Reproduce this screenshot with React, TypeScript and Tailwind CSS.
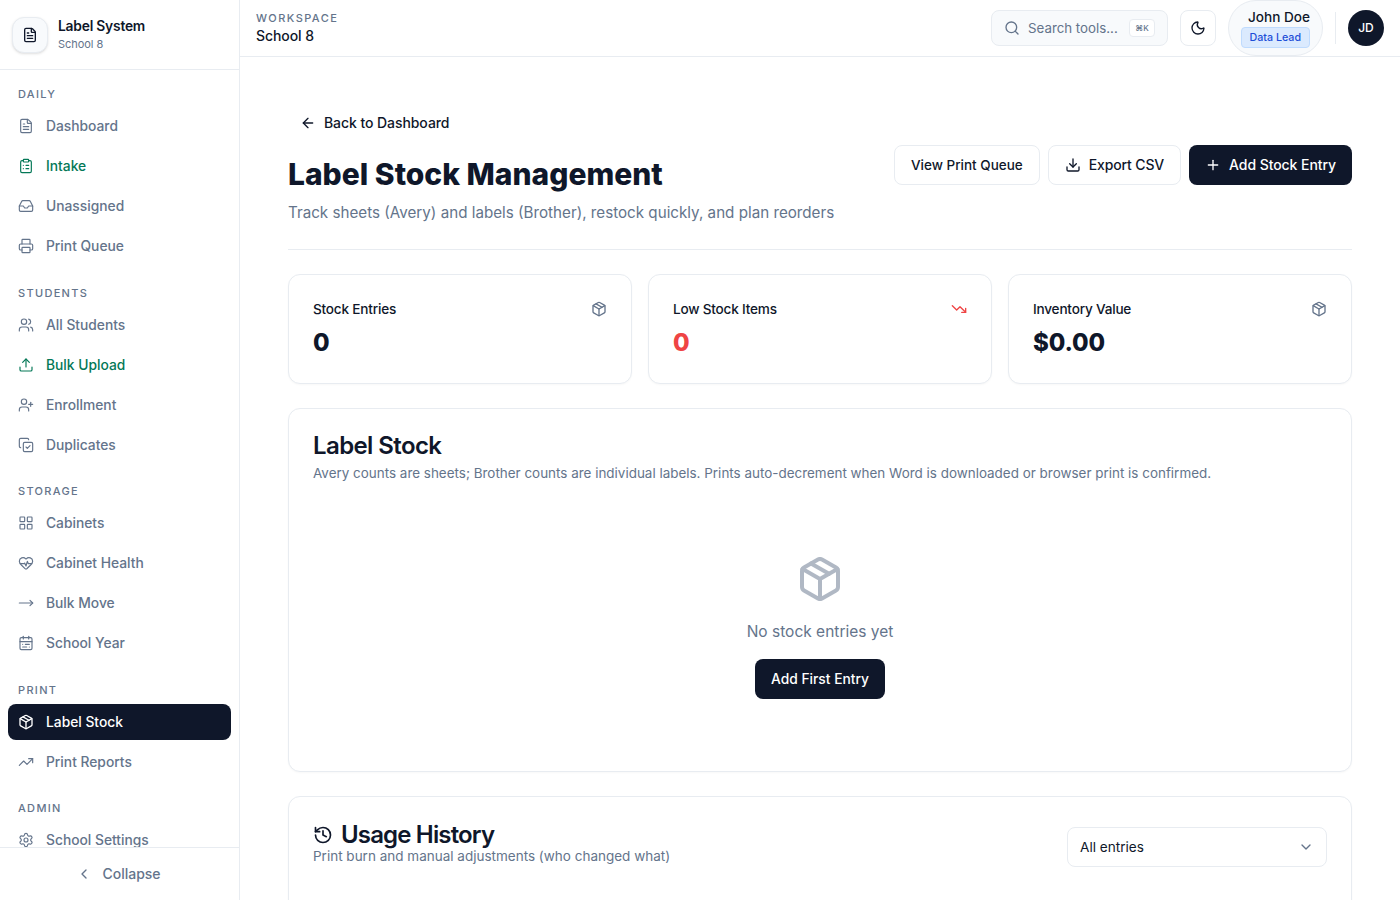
import {
  ArrowLeft,
  CalendarRange,
  ChevronDown,
  ChevronLeft,
  ClipboardList,
  CopyCheck,
  Download,
  FileText,
  HeartPulse,
  History,
  Inbox,
  LayoutGrid,
  Moon,
  MoveRight,
  Package,
  Plus,
  Printer,
  Search,
  Settings,
  TrendingDown,
  TrendingUp,
  Upload,
  UserPlus,
  Users,
} from "lucide-react";

const sections = [
  {
    title: "DAILY",
    items: [
      { label: "Dashboard", icon: FileText },
      { label: "Intake", icon: ClipboardList, green: true },
      { label: "Unassigned", icon: Inbox },
      { label: "Print Queue", icon: Printer },
    ],
  },
  {
    title: "STUDENTS",
    items: [
      { label: "All Students", icon: Users },
      { label: "Bulk Upload", icon: Upload, green: true },
      { label: "Enrollment", icon: UserPlus },
      { label: "Duplicates", icon: CopyCheck },
    ],
  },
  {
    title: "STORAGE",
    items: [
      { label: "Cabinets", icon: LayoutGrid },
      { label: "Cabinet Health", icon: HeartPulse },
      { label: "Bulk Move", icon: MoveRight },
      { label: "School Year", icon: CalendarRange },
    ],
  },
  {
    title: "PRINT",
    items: [
      { label: "Label Stock", icon: Package, active: true },
      { label: "Print Reports", icon: TrendingUp },
    ],
  },
  {
    title: "ADMIN",
    items: [{ label: "School Settings", icon: Settings }],
  },
];

function Sidebar() {
  return (
    <aside className="flex h-full w-[240px] shrink-0 flex-col border-r border-[#e8ecf1] bg-white">
      <div className="flex h-[70px] shrink-0 items-center gap-[10px] border-b border-[#e8ecf1] px-3">
        <div className="flex h-9 w-9 items-center justify-center rounded-xl border border-[#e8ecf1] bg-[#f8fafc] shadow-sm">
          <FileText className="h-4 w-4 text-[#0f172a]" />
        </div>
        <div className="-mt-[2px]">
          <div className="text-[13.8px] leading-[20px] font-semibold tracking-[-0.015em] text-[#0f172a]">Label System</div>
          <div className="text-[11px] leading-[16px] tracking-[-0.005em] text-[#64748b]">School 8</div>
        </div>
      </div>
      <nav className="min-h-0 flex-1 overflow-hidden px-2 pt-4">
        {sections.map((s) => (
          <div key={s.title} className="mb-5">
            <div className="mb-[6.5px] px-[10px] text-[11px] leading-[16px] font-medium tracking-[0.12em] text-[#64748b]">{s.title}</div>
            <div className="flex flex-col gap-1">
              {s.items.map((item) => (
                <div
                  key={item.label}
                  className={
                    item.active
                      ? "flex h-9 items-center gap-3 rounded-lg bg-[#0f172a] px-[10px] text-[13.8px] font-medium text-white"
                      : item.green
                        ? "flex h-9 items-center gap-3 rounded-lg px-[10px] text-[13.8px] font-medium text-[#047857]"
                        : "flex h-9 items-center gap-3 rounded-lg px-[10px] text-[13.8px] font-medium text-[#64748b]"
                  }
                >
                  <item.icon className="-mt-[1px] h-4 w-4 shrink-0" strokeWidth={item.active ? 2 : 1.75} />
                  <span>{item.label}</span>
                </div>
              ))}
            </div>
          </div>
        ))}
      </nav>
      <div className="flex h-[53px] shrink-0 items-center justify-center gap-[10px] border-t border-[#e8ecf1] pb-[1px] text-[14px] font-medium text-[#64748b]">
        <ChevronLeft className="-ml-[2px] h-4 w-4" />
        <span>Collapse</span>
      </div>
    </aside>
  );
}

function Topbar() {
  return (
    <header className="flex h-[57px] shrink-0 items-center justify-between border-b border-[#e8ecf1] bg-white pr-4 pl-4">
      <div>
        <div className="text-[11px] leading-[16px] font-medium tracking-[0.13em] text-[#64748b]">WORKSPACE</div>
        <div className="text-[14px] leading-[20px] font-medium tracking-[-0.005em] text-[#0f172a]">School 8</div>
      </div>
      <div className="flex items-center">
        <div className="flex h-9 w-[177px] items-center rounded-lg border border-[#e8ecf1] bg-[#f8fafc] pr-3 pl-3">
          <Search className="h-4 w-4 shrink-0 text-[#64748b]" />
          <span className="ml-2 pt-[2px] text-[13.3px] text-[#64748b]">Search tools...</span>
          <span className="ml-auto flex h-[18px] w-[26px] items-center justify-center rounded border border-[#e8ecf1] bg-white text-[8px] font-medium text-[#64748b]">⌘K</span>
        </div>
        <div className="ml-3 flex h-9 w-9 items-center justify-center rounded-lg border border-[#e8ecf1] bg-white">
          <Moon className="h-4 w-4 text-[#0f172a]" />
        </div>
        <div className="ml-3 flex h-[56px] w-[95px] flex-col items-end justify-center rounded-full border border-[#e8ecf1] bg-[#f8fafc] pr-3">
          <div className="-mt-[2px] text-[13.6px] leading-[20px] font-medium text-[#0f172a]">John Doe</div>
          <div className="rounded border border-[#bfdbfe] bg-[#dbeafe] px-2 text-[10.7px] leading-[19px] font-medium text-[#1d4ed8]">Data Lead</div>
        </div>
        <div className="mx-3 h-8 w-px bg-[#e8ecf1]" />
        <div className="flex h-9 w-9 items-center justify-center rounded-full bg-[#0f172a] text-[12px] font-medium text-white">JD</div>
      </div>
    </header>
  );
}

function StatCard({ label, value, red, icon: Icon }: { label: string; value: string; red?: boolean; icon: typeof Package }) {
  return (
    <div className="h-[110px] rounded-xl border border-[#e8ecf1] bg-white px-6 pt-6 shadow-[0_1px_2px_rgba(15,23,42,0.03)]">
      <div className="flex items-center justify-between">
        <div className="text-[13.6px] leading-[20px] font-medium tracking-[-0.015em] text-[#0f172a]">{label}</div>
        <Icon className={red ? "h-4 w-4 text-[#ef4444]" : "h-4 w-4 text-[#64748b]"} />
      </div>
      <div className={red ? "mt-2 text-2xl font-extrabold text-[#ef4444]" : "mt-2 text-2xl font-extrabold tracking-[-0.005em] text-[#0f172a]"}>{value}</div>
    </div>
  );
}

export default function App() {
  return (
    <div className="flex h-screen overflow-hidden bg-white font-['Inter',sans-serif]">
      <Sidebar />
      <div className="flex min-w-0 flex-1 flex-col">
        <Topbar />
        <main className="min-h-0 flex-1 overflow-hidden px-12 pt-12">
          <div className="flex h-9 items-center gap-2 px-3 text-[14px] font-medium tracking-[-0.005em] text-[#0f172a]">
            <ArrowLeft className="h-4 w-4" />
            <span className="-mt-[1px]">Back to Dashboard</span>
          </div>
          <div className="mt-1 flex items-start justify-between border-b border-[#e8ecf1] pb-[24px]">
            <div className="pt-[11px]">
              <h1 className="text-3xl font-extrabold text-[#0f172a]">Label Stock Management</h1>
              <p className="mt-[9px] text-[15.2px] leading-[24px] text-[#64748b]">Track sheets (Avery) and labels (Brother), restock quickly, and plan reorders</p>
            </div>
            <div className="flex gap-2">
              <div className="flex h-10 items-center rounded-lg border border-[#e8ecf1] bg-white px-4 text-[13.5px] font-medium text-[#0f172a]">View Print Queue</div>
              <div className="flex h-10 items-center gap-2 rounded-lg border border-[#e8ecf1] bg-white px-4 text-[14px] font-medium tracking-[-0.01em] text-[#0f172a]">
                <Download className="h-4 w-4" />
                <span className="pb-[2px]">Export CSV</span>
              </div>
              <div className="flex h-10 items-center gap-2 rounded-lg bg-[#0f172a] px-4 text-[14px] font-medium tracking-[-0.005em] text-white">
                <Plus className="h-4 w-4" />
                <span className="pb-[2px]">Add Stock Entry</span>
              </div>
            </div>
          </div>

          <div className="mt-6 grid grid-cols-3 gap-4">
            <StatCard label="Stock Entries" value="0" icon={Package} />
            <StatCard label="Low Stock Items" value="0" red icon={TrendingDown} />
            <StatCard label="Inventory Value" value="$0.00" icon={Package} />
          </div>

          <section className="mt-6 h-[364px] rounded-xl border border-[#e8ecf1] bg-white px-6 pt-[25px] shadow-[0_1px_2px_rgba(15,23,42,0.03)]">
            <h2 className="text-2xl leading-none font-semibold tracking-[-0.025em] text-[#0f172a]">Label Stock</h2>
            <p className="mt-[5px] text-[13.45px] leading-[20px] text-[#64748b]">
              Avery counts are sheets; Brother counts are individual labels. Prints auto-decrement when Word is downloaded or browser print is confirmed.
            </p>
            <div className="mt-[72px] flex flex-col items-center">
              <Package className="h-12 w-12 text-[#64748b] opacity-50" />
              <p className="mt-[17px] text-[15.5px] leading-[24px] text-[#64748b]">No stock entries yet</p>
              <div className="mt-[15px] flex h-10 items-center rounded-lg bg-[#0f172a] px-4 text-[13.8px] font-medium text-white">Add First Entry</div>
            </div>
          </section>

          <section className="mt-6 h-[300px] rounded-xl border border-[#e8ecf1] bg-white px-6 pt-[26px] shadow-[0_1px_2px_rgba(15,23,42,0.03)]">
            <div className="flex items-start justify-between">
              <div>
                <h2 className="flex items-center gap-2 text-2xl leading-none font-semibold tracking-[-0.035em] text-[#0f172a]">
                  <History className="h-5 w-5" />
                  Usage History
                </h2>
                <p className="-mt-[1px] text-[13.5px] leading-[20px] text-[#64748b]">Print burn and manual adjustments (who changed what)</p>
              </div>
              <div className="mt-[4px] flex h-10 w-[260px] items-center justify-between rounded-lg border border-[#e8ecf1] bg-white px-3 text-[13.6px] text-[#0f172a]">
                <span>All entries</span>
                <ChevronDown className="h-4 w-4 text-[#64748b]" />
              </div>
            </div>
          </section>
        </main>
      </div>
    </div>
  );
}
